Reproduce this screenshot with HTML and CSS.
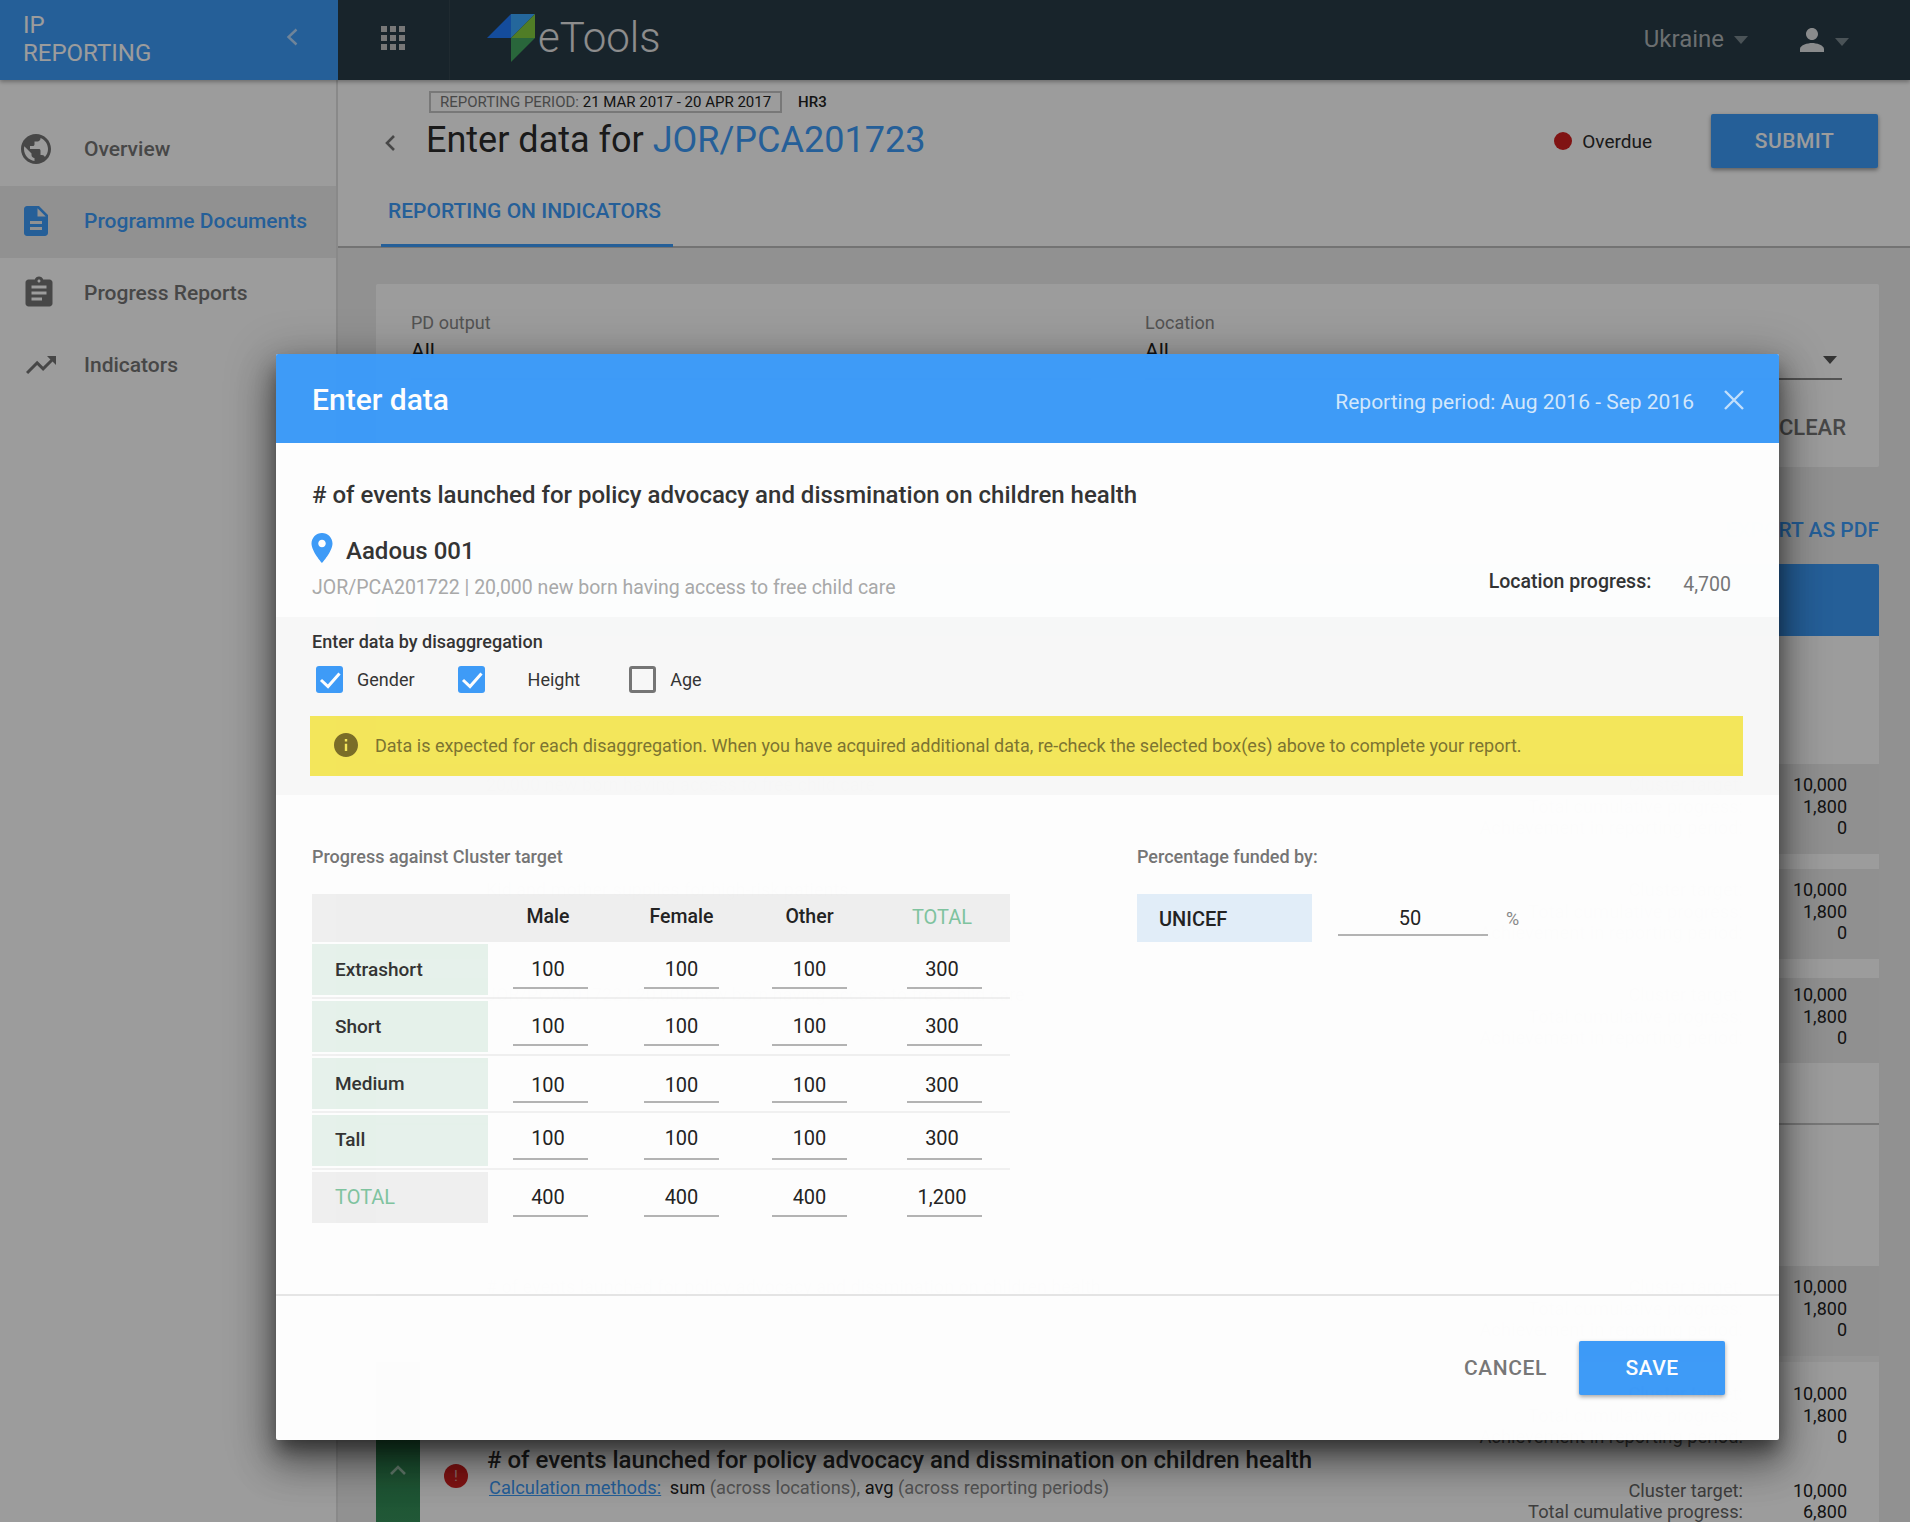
FILE: index.html
```html
<!DOCTYPE html>
<html>

<head>
    <meta charset="utf-8" />
    <title>IP Reporting - Enter data</title>
    <link rel="stylesheet" href="styles.css">
</head>

<body>
    <header class="topbar">
        <div class="brand">
            <div class="brand-name">IP<br>REPORTING</div>
            <svg class="brand-back" viewBox="0 0 12 18"><path d="M10.5 1.5 2.5 9l8 7.5" /></svg>
        </div>
        <div class="apps">
            <svg viewBox="0 0 24 24"><path d="M4 8h4V4H4v4zm6 12h4v-4h-4v4zm-6 0h4v-4H4v4zm0-6h4v-4H4v4zm6 0h4v-4h-4v4zm6-10v4h4V4h-4zm-6 4h4V4h-4v4zm6 6h4v-4h-4v4zm0 6h4v-4h-4v4z" /></svg>
        </div>
        <div class="logo">
            <svg viewBox="0 0 48 48">
                <path fill="#227cff" d="M0 24 24 0v24z" />
                <path fill="#3ba8ff" d="M24 0h24L24 24z" />
                <path fill="#84cc3f" d="M48 0v24H24z" />
                <path fill="#43a761" d="M24 24h24L24 48z" />
            </svg>
            <span>eTools</span>
        </div>
        <div class="country">Ukraine<i class="caret"></i></div>
        <div class="user">
            <svg viewBox="0 0 24 24"><path d="M12 12c2.21 0 4-1.79 4-4s-1.79-4-4-4-4 1.79-4 4 1.79 4 4 4zm0 2c-2.67 0-8 1.34-8 4v2h16v-2c0-2.66-5.33-4-8-4z" /></svg>
            <i class="caret"></i>
        </div>
    </header>

    <div class="layout">
        <nav class="sidebar">
            <a class="nav-item">
                <svg viewBox="0 0 24 24"><path d="M12 2C6.48 2 2 6.48 2 12s4.48 10 10 10 10-4.48 10-10S17.52 2 12 2zm-1 17.93c-3.95-.49-7-3.85-7-7.93 0-.62.08-1.21.21-1.79L9 15v1c0 1.1.9 2 2 2v1.93zm6.9-2.54c-.26-.81-1-1.39-1.9-1.39h-1v-3c0-.55-.45-1-1-1H8v-2h2c.55 0 1-.45 1-1V7h2c1.1 0 2-.9 2-2v-.41c2.93 1.19 5 4.06 5 7.41 0 2.08-.8 3.97-2.1 5.39z" /></svg>
                Overview
            </a>
            <a class="nav-item active">
                <svg viewBox="0 0 24 24"><path d="M14 2H6c-1.1 0-1.99.9-1.99 2L4 20c0 1.1.89 2 1.99 2H18c1.1 0 2-.9 2-2V8l-6-6zm2 16H8v-2h8v2zm0-4H8v-2h8v2zm-3-5V3.5L18.5 9H13z" /></svg>
                Programme Documents
            </a>
            <a class="nav-item nudge-3">
                <svg viewBox="0 0 24 24"><path d="M19 3h-4.18C14.4 1.84 13.3 1 12 1c-1.3 0-2.4.84-2.82 2H5c-1.1 0-2 .9-2 2v14c0 1.1.9 2 2 2h14c1.1 0 2-.9 2-2V5c0-1.1-.9-2-2-2zm-7 0c.55 0 1 .45 1 1s-.45 1-1 1-1-.45-1-1 .45-1 1-1zm2 14H7v-2h7v2zm3-4H7v-2h10v2zm0-4H7V7h10v2z" /></svg>
                Progress Reports
            </a>
            <a class="nav-item nudge-5">
                <svg viewBox="0 0 24 24"><path d="M16 6l2.29 2.29-4.88 4.88-4-4L2 16.59 3.41 18l6-6 4 4 6.3-6.29L22 12V6z" /></svg>
                Indicators
            </a>
        </nav>

        <main class="main">
            <div class="page-head">
                <div class="period-row">
                    <span class="period-tag">REPORTING PERIOD: <b>21 MAR 2017 - 20 APR 2017</b></span>
                    <span class="period-code">HR3</span>
                </div>
                <div class="title-row">
                    <svg class="page-back" viewBox="0 0 12 18"><path d="M10 2 3 9l7 7" /></svg>
                    <h1>Enter data for <a>JOR/PCA201723</a></h1>
                    <div class="status"><i></i>Overdue</div>
                    <div class="btn-submit">SUBMIT</div>
                </div>
                <div class="tab">REPORTING ON INDICATORS</div>
            </div>

            <div class="content">
                <div class="filter-card">
                    <div class="filter-col">
                        <label>PD output</label>
                        <div class="filter-value">All</div>
                    </div>
                    <div class="filter-col wide">
                        <label>Location</label>
                        <div class="filter-value">All</div>
                        <i class="caret"></i>
                    </div>
                    <div class="filter-clear">CLEAR</div>
                </div>

                <div class="export">EXPORT AS PDF</div>
                <div class="panel-head"></div>

                <div class="panel">
                    <div class="ind-head"></div>
                    <div class="ind-row">
                        <div class="ind-title">20,000 new born having access to free child care</div>
                        <div class="ind-labels"><div>Cluster target:</div><div>Total cumulative progress:</div><div>Achievement in reporting period:</div></div>
                        <div class="ind-values"><div>10,000</div><div>1,800</div><div>0</div></div>
                    </div>
                    <div class="ind-row gap-15">
                        <div class="ind-title">Kid and mother supplies for high-risk patients</div>
                        <div class="ind-labels"><div>Cluster target:</div><div>Total cumulative progress:</div><div>Achievement in reporting period:</div></div>
                        <div class="ind-values"><div>10,000</div><div>1,800</div><div>0</div></div>
                    </div>
                    <div class="ind-row gap-19 short">
                        <div class="ind-title">JOR/PCA201722 | 20,000 new born having access to free child care</div>
                        <div class="ind-labels"><div>Cluster target:</div><div>Total cumulative progress:</div><div>Achievement in reporting period:</div></div>
                        <div class="ind-values"><div>10,000</div><div>1,800</div><div>0</div></div>
                    </div>
                    <div class="ind-spacer first"></div>
                    <div class="ind-spacer second"></div>
                    <div class="ind-row">
                        <div class="ind-title"># of events launched for policy advocacy and dissmination on children health</div>
                        <div class="ind-labels"><div>Cluster target:</div><div>Total cumulative progress:</div><div>Achievement in reporting period:</div></div>
                        <div class="ind-values"><div>10,000</div><div>1,800</div><div>0</div></div>
                    </div>
                    <div class="ind-band"></div>

                    <div class="ind-last">
                        <div class="ind-bar">
                            <svg viewBox="0 0 20 12"><path d="M3 10l7-7 7 7" /></svg>
                        </div>
                        <div class="ind-alert">!</div>
                        <div class="ind-main">
                            <div class="ind-name"># of events launched for policy advocacy and dissmination on children health</div>
                            <div class="ind-calc">
                                <a>Calculation methods:</a> <b>sum</b> (across locations), <b>avg</b> (across reporting periods)
                            </div>
                        </div>
                        <div class="ind-figures">
                            <div class="ind-line"><div class="ind-labels"><div>Cluster target:</div><div>Total cumulative progress:</div><div>Achievement in reporting period:</div></div>
                                <div class="ind-values"><div>10,000</div><div>1,800</div><div>0</div></div></div>
                            <div class="ind-line next"><div class="ind-labels"><div>Cluster target:</div><div>Total cumulative progress:</div></div>
                                <div class="ind-values"><div>10,000</div><div>6,800</div></div></div>
                        </div>
                    </div>
                </div>
            </div>
        </main>
    </div>

    <div class="backdrop"></div>

    <section class="modal">
        <div class="modal-head">
            <h2>Enter data</h2>
            <span class="modal-period">Reporting period: Aug 2016 - Sep 2016</span>
            <svg class="modal-close" viewBox="0 0 20 20"><path d="M1 1l18 18M19 1 1 19" /></svg>
        </div>

        <div class="modal-intro">
            <h3># of events launched for policy advocacy and dissmination on children health</h3>
            <div class="location-row">
                <div>
                    <div class="location-name">
                        <svg viewBox="5 2 14 20"><path d="M12 2C8.13 2 5 5.13 5 9c0 5.25 7 13 7 13s7-7.75 7-13c0-3.87-3.13-7-7-7zm0 9.5c-1.38 0-2.5-1.12-2.5-2.5s1.12-2.5 2.5-2.5 2.5 1.12 2.5 2.5-1.12 2.5-2.5 2.5z" /></svg>
                        Aadous 001
                    </div>
                    <div class="location-sub">JOR/PCA201722 | 20,000 new born having access to free child care</div>
                </div>
                <div class="location-progress"><b>Location progress:</b><span>4,700</span></div>
            </div>
        </div>

        <div class="disagg">
            <div class="disagg-title">Enter data by disaggregation</div>
            <div class="checks">
                <div class="check on">
                    <svg viewBox="0 0 27 27"><path d="M5 14l7 6.5L23.5 7.5" /></svg>
                </div>
                <span class="check-label gender">Gender</span>
                <div class="check on">
                    <svg viewBox="0 0 27 27"><path d="M5 14l7 6.5L23.5 7.5" /></svg>
                </div>
                <span class="check-label height">Height</span>
                <div class="check"></div>
                <span class="check-label">Age</span>
            </div>
            <div class="notice">
                <svg viewBox="2 2 20 20"><path d="M12 2C6.48 2 2 6.48 2 12s4.48 10 10 10 10-4.48 10-10S17.52 2 12 2zm1 15h-2v-6h2v6zm0-8h-2V7h2v2z" /></svg>
                Data is expected for each disaggregation. When you have acquired additional data, re-check the selected box(es) above to complete your report.
            </div>
        </div>

        <div class="entry">
            <div class="entry-left">
                <div class="entry-title">Progress against Cluster target</div>
                <div class="grid-row grid-head">
                    <div></div>
                    <div class="num first">Male</div>
                    <div class="num">Female</div>
                    <div class="num">Other</div>
                    <div class="num last total-text">TOTAL</div>
                </div>
                <div class="grid-row">
                    <div class="row-label">Extrashort</div>
                    <div class="num first field">100</div>
                    <div class="num field">100</div>
                    <div class="num field">100</div>
                    <div class="num last field">300</div>
                </div>
                <div class="grid-row">
                    <div class="row-label">Short</div>
                    <div class="num first field">100</div>
                    <div class="num field">100</div>
                    <div class="num field">100</div>
                    <div class="num last field">300</div>
                </div>
                <div class="grid-row row-medium">
                    <div class="row-label">Medium</div>
                    <div class="num first field">100</div>
                    <div class="num field">100</div>
                    <div class="num field">100</div>
                    <div class="num last field">300</div>
                </div>
                <div class="grid-row row-tall">
                    <div class="row-label">Tall</div>
                    <div class="num first field">100</div>
                    <div class="num field">100</div>
                    <div class="num field">100</div>
                    <div class="num last field">300</div>
                </div>
                <div class="grid-row grid-total">
                    <div class="row-label total-text">TOTAL</div>
                    <div class="num first field">400</div>
                    <div class="num field">400</div>
                    <div class="num field">400</div>
                    <div class="num last field">1,200</div>
                </div>
            </div>
            <div class="entry-right">
                <div class="entry-title">Percentage funded by:</div>
                <div class="fund-row">
                    <div class="fund-name">UNICEF</div>
                    <div class="fund-input">50</div>
                    <span class="fund-unit">%</span>
                </div>
            </div>
        </div>

        <div class="modal-foot">
            <span class="btn-cancel">CANCEL</span>
            <span class="btn-save">SAVE</span>
        </div>
    </section>
</body>

</html>
```

FILE: styles.css
```css
* {
    box-sizing: border-box;
}

html,
body {
    font-family: Roboto, 'Liberation Sans', sans-serif;
    margin: 0;
    padding: 0;
    height: 1522px;
    overflow: hidden;
    color: #333;
    background: #eee;
}

h1,
h2,
h3 {
    margin: 0;
}

.caret {
    display: inline-block;
    width: 0;
    height: 0;
    border-left: 7px solid transparent;
    border-right: 7px solid transparent;
    border-top: 8px solid #7a888f;
}

/* top bar */
.topbar {
    display: flex;
    align-items: center;
    height: 80px;
    background: #283b47;
    position: relative;
    z-index: 2;
    box-shadow: 0 2px 4px rgba(0, 0, 0, .3);
}

.brand {
    display: flex;
    align-items: center;
    justify-content: space-between;
    width: 338px;
    height: 80px;
    padding: 0 40px 2px 23px;
    background: #3d9bf9;
}

.brand-name {
    font-size: 24px;
    line-height: 28px;
    color: #fff;
}

.brand-back {
    width: 12px;
    height: 18px;
    margin-top: -4px;
    fill: none;
    stroke: #b6d8fb;
    stroke-width: 2.4;
}

.apps {
    width: 112px;
    height: 80px;
    padding: 20px 0 0 37px;
    border-right: 1px solid #34464f;
}

.apps svg {
    display: block;
    width: 36px;
    height: 36px;
    fill: #c4c4c4;
}

.logo {
    display: flex;
    align-items: center;
    margin-left: 37px;
    flex: 1;
}

.logo svg {
    width: 48px;
    height: 48px;
    margin-top: -5px;
}

.logo span {
    font-size: 42px;
    font-weight: 300;
    color: #e6e6e6;
    margin: -5px 0 0 3px;
}

.country {
    display: flex;
    align-items: center;
    font-size: 24px;
    color: #afb5b8;
    margin-right: 46px;
    margin-top: -2px;
}

.country .caret {
    margin-left: 10px;
    margin-top: 2px;
}

.user {
    display: flex;
    align-items: center;
    margin-right: 61px;
}

.user svg {
    width: 36px;
    height: 36px;
    fill: #e0e3e5;
}

.user .caret {
    margin-left: 5px;
    margin-top: 3px;
}

/* page under the dialog */
.layout {
    display: flex;
    height: 1442px;
}

.sidebar {
    width: 338px;
    flex-shrink: 0;
    padding-top: 34px;
    background: #fff;
    border-right: 2px solid #e0e0e0;
}

.nav-item {
    display: flex;
    align-items: center;
    gap: 30px;
    height: 72px;
    padding: 0 0 2px 18px;
    font-size: 21px;
    font-weight: 500;
    color: #757575;
}

.nav-item svg {
    width: 36px;
    height: 36px;
    fill: #757575;
}

.nav-item.nudge-3 svg {
    margin: 0 -3px 0 3px;
}

.nav-item.nudge-5 svg {
    margin: 0 -5px 0 5px;
}

.nav-item.active {
    background: #eee;
    color: #3d9bf9;
}

.nav-item.active svg {
    fill: #3d9bf9;
}

.main {
    flex: 1;
    min-width: 0;
}

.page-head {
    height: 168px;
    background: #fff;
    border-bottom: 2px solid #bcbcbc;
}

.period-row {
    display: flex;
    align-items: center;
    gap: 16px;
    padding: 11px 0 0 91px;
}

.period-tag {
    height: 22px;
    padding: 0 9px;
    border: 2px solid #c4c4c4;
    font-size: 15px;
    line-height: 18px;
    color: #777;
    white-space: nowrap;
}

.period-tag b {
    font-weight: 400;
    color: #222;
}

.period-code {
    font-size: 15px;
    font-weight: 500;
    color: #222;
}

.title-row {
    display: flex;
    align-items: center;
    height: 54px;
    margin-top: 1px;
    padding: 0 32px 0 46px;
}

.page-back {
    width: 12px;
    height: 18px;
    margin-right: 30px;
    margin-top: 4px;
    fill: none;
    stroke: #757575;
    stroke-width: 2.6;
}

h1 {
    flex: 1;
    font-size: 36px;
    font-weight: 400;
    color: #2b2b2b;
    margin-top: -2px;
}

h1 a {
    color: #3d9bf9;
}

.status {
    display: flex;
    align-items: center;
    gap: 10px;
    font-size: 19px;
    color: #2b2b2b;
    margin-right: 59px;
}

.status i {
    width: 18px;
    height: 18px;
    border-radius: 50%;
    background: #d11f1f;
}

.btn-submit {
    width: 167px;
    height: 54px;
    line-height: 54px;
    text-align: center;
    background: #3d9bf9;
    color: #fff;
    font-size: 21px;
    font-weight: 500;
    letter-spacing: .5px;
    border-radius: 2px;
    box-shadow: 0 2px 4px rgba(0, 0, 0, .4);
}

.tab {
    display: flex;
    align-items: center;
    width: 292px;
    height: 79px;
    margin: 0 0 0 43px;
    padding: 10px 0 0 7px;
    font-size: 21px;
    font-weight: 500;
    color: #3d9bf9;
    border-bottom: 3px solid #3d9bf9;
    white-space: nowrap;
}

.content {
    padding: 36px 31px 0 38px;
}

.filter-card {
    position: relative;
    display: flex;
    gap: 54px;
    height: 183px;
    padding: 28px 33px 0 35px;
    background: #fff;
    border-radius: 2px;
}

.filter-col {
    position: relative;
    width: 680px;
    height: 68px;
    border-bottom: 2px solid #888;
}

.filter-col.wide {
    width: 697px;
}

.filter-col label {
    display: block;
    font-size: 18px;
    line-height: 22px;
    color: #888;
}

.filter-value {
    font-size: 21px;
    margin-top: 5px;
    color: #222;
}

.filter-col .caret {
    position: absolute;
    right: 5px;
    top: 44px;
    border-top-color: #555;
}

.filter-clear {
    position: absolute;
    right: 33px;
    top: 131px;
    font-size: 22px;
    font-weight: 500;
    color: #757575;
}

.export {
    margin: 51px 0 22px;
    height: 24px;
    line-height: 24px;
    text-align: right;
    font-size: 21px;
    font-weight: 500;
    color: #3d9bf9;
}

.panel-head {
    height: 72px;
    background: #3d9bf9;
    border-radius: 2px 2px 0 0;
}

.panel {
    background: #fff;
    font-size: 18px;
}

.ind-head {
    height: 128px;
}

.ind-row {
    display: flex;
    height: 90px;
    padding: 10px 32px 0 110px;
    background: #ebebeb;
    line-height: 21.5px;
}

.ind-row.gap-15 {
    margin-top: 15px;
}

.ind-row.gap-19 {
    margin-top: 19px;
}

.ind-row.short {
    height: 85px;
    padding-top: 6px;
}

.ind-title {
    flex: 1;
    color: #666;
}

.ind-labels {
    text-align: right;
    font-size: 18.3px;
    color: #666;
    white-space: nowrap;
}

.ind-values {
    width: 104px;
    text-align: right;
    color: #222;
}

.ind-spacer.first {
    height: 62px;
    border-bottom: 2px solid #c4c4c4;
}

.ind-spacer.second {
    height: 141px;
}

.ind-band {
    height: 6px;
    background: #f4f4f4;
}

.ind-last {
    display: flex;
    height: 160px;
}

.ind-bar {
    width: 44px;
    padding-top: 97px;
    background: linear-gradient(#237040, #36905a);
    text-align: center;
}

.ind-bar svg {
    width: 20px;
    height: 12px;
    fill: none;
    stroke: #a3c9b2;
    stroke-width: 2.6;
}

.ind-alert {
    width: 24px;
    height: 24px;
    margin: 102px 19px 0 24px;
    border-radius: 50%;
    background: #d11f1f;
    color: #e6b0b0;
    font-size: 15px;
    line-height: 24px;
    text-align: center;
    flex-shrink: 0;
}

.ind-main {
    flex: 1;
    padding-top: 84px;
    min-width: 0;
}

.ind-name {
    font-size: 24px;
    line-height: 28px;
    font-weight: 500;
    color: #2b2b2b;
    white-space: nowrap;
}

.ind-calc {
    font-size: 18.3px;
    line-height: 28px;
    margin-left: 2px;
    color: #888;
    white-space: nowrap;
}

.ind-calc a {
    color: #3d9bf9;
    text-decoration: underline;
    margin-right: 4px;
}

.ind-calc b {
    font-weight: 400;
    color: #222;
}

.ind-figures {
    padding: 21px 32px 0 0;
    line-height: 21.5px;
}

.ind-line {
    display: flex;
    justify-content: flex-end;
}

.ind-line.next {
    margin-top: 32px;
}

/* dialog */
.backdrop {
    position: absolute;
    inset: 0;
    z-index: 5;
    background: rgba(0, 0, 0, .39);
}

.modal {
    position: absolute;
    left: 276px;
    top: 354px;
    z-index: 6;
    width: 1503px;
    height: 1086px;
    background: #fff;
    opacity: .988;
    border-radius: 2px;
    box-shadow: 0 12px 20px rgba(0, 0, 0, .25), 0 24px 38px 3px rgba(0, 0, 0, .3), 0 9px 46px 8px rgba(0, 0, 0, .22), 0 11px 15px -7px rgba(0, 0, 0, .3);
}

.modal-head {
    display: flex;
    align-items: center;
    height: 89px;
    padding: 0 35px 0 36px;
    background: #3d9bf9;
    border-radius: 2px 2px 0 0;
    color: #fff;
}

.modal-head h2 {
    flex: 1;
    font-size: 30px;
    font-weight: 500;
    margin-top: 2px;
}

.modal-period {
    font-size: 21px;
    color: #d3e8fd;
    margin-top: 7px;
}

.modal-close {
    width: 20px;
    height: 20px;
    margin: 2px 0 0 30px;
    fill: none;
    stroke: #c3e0fd;
    stroke-width: 2.4;
}

.modal-intro {
    height: 174px;
    padding: 37px 48px 0 36px;
}

.modal-intro h3 {
    font-size: 24px;
    line-height: 30px;
    font-weight: 500;
    color: #333;
}

.location-row {
    display: flex;
    justify-content: space-between;
    margin-top: 23px;
}

.location-name {
    display: flex;
    align-items: center;
    gap: 13px;
    height: 36px;
    font-size: 24px;
    font-weight: 500;
    color: #333;
}

.location-name svg {
    width: 22px;
    height: 30px;
    margin: -6px 0 0 -1px;
    fill: #3d9bf9;
}

.location-sub {
    margin-top: 6px;
    font-size: 19.5px;
    line-height: 26px;
    color: #aaa;
}

.location-progress {
    display: flex;
    gap: 32px;
    align-self: flex-end;
    padding-bottom: 3px;
    font-size: 19.5px;
    line-height: 26px;
    color: #777;
}

.location-progress b {
    font-weight: 500;
    color: #333;
}

.location-progress span {
    padding-top: 3px;
}

.disagg {
    height: 178px;
    padding: 14px 36px 0 34px;
    background: #f9f9f9;
}

.disagg-title {
    font-size: 18px;
    line-height: 22px;
    font-weight: 500;
    color: #333;
    margin-left: 2px;
}

.checks {
    display: flex;
    align-items: center;
    height: 27px;
    margin: 13px 0 0 6px;
}

.check {
    width: 27px;
    height: 27px;
    border: 3px solid #757575;
    border-radius: 3px;
}

.check.on {
    background: #3d9bf9;
    border: 0;
}

.check svg {
    display: block;
    width: 27px;
    height: 27px;
    fill: none;
    stroke: #fff;
    stroke-width: 3;
}

.check-label {
    font-size: 18px;
    color: #333;
    margin-left: 14px;
}

.check-label.gender {
    margin-right: 43px;
}

.check-label.height {
    margin: 0 49px 0 43px;
}

.notice {
    display: flex;
    align-items: center;
    gap: 17px;
    height: 60px;
    margin: 23px 0 0;
    padding: 0 0 2px 24px;
    background: #f5e75b;
    font-size: 18px;
    color: #7c7430;
    white-space: nowrap;
}

.notice svg {
    width: 24px;
    height: 24px;
    flex-shrink: 0;
    fill: #7a6d27;
}

.entry {
    display: flex;
    height: 501px;
    padding: 50px 0 0 36px;
    border-bottom: 2px solid #e6e6e6;
}

.entry-left {
    width: 825px;
}

.entry-title {
    font-size: 18px;
    line-height: 24px;
    font-weight: 500;
    color: #757575;
    margin-bottom: 25px;
}

.grid-row {
    display: grid;
    grid-template-columns: 176px 100px 131px 128px 135px;
    width: 698px;
    height: 55px;
    padding-bottom: 2px;
    margin-bottom: 2px;
    border-bottom: 2px solid #f1f1f1;
    font-size: 20px;
    color: #222;
}

.grid-row.grid-head {
    height: 48px;
    padding: 0;
    background: #f0f0f0;
    border: 0;
    font-size: 19.5px;
    font-weight: 500;
}

.grid-row.grid-total {
    border: 0;
}

.row-label {
    display: flex;
    align-items: center;
    height: 51px;
    padding-left: 23px;
    background: #e7f3ec;
    font-size: 19px;
    font-weight: 500;
    color: #333;
}

.grid-total .row-label {
    height: 51px;
    padding-bottom: 2px;
    background: #f0f0f0;
    font-size: 20px;
    font-weight: 400;
    color: #7fc4a0;
}

.num {
    justify-self: end;
    width: 75px;
    line-height: 46px;
    text-align: center;
}

.num.first {
    padding-right: 5px;
}

.num.last {
    padding-right: 5px;
}

.field {
    height: 45px;
    line-height: 50px;
    border-bottom: 2px solid #b4b4b4;
}

.row-medium .field {
    line-height: 55px;
}

.row-tall .field {
    line-height: 47px;
}

.row-tall .row-label {
    padding-bottom: 3px;
}

.total-text {
    color: #7fc4a0;
    font-size: 20px;
    font-weight: 400;
}

.entry-right {
    flex: 1;
}

.fund-row {
    display: flex;
    align-items: flex-start;
}

.fund-name {
    width: 175px;
    height: 48px;
    line-height: 50px;
    padding-left: 22px;
    background: #e2effa;
    font-size: 20px;
    font-weight: 500;
    color: #222;
}

.fund-input {
    width: 150px;
    height: 42px;
    margin-left: 26px;
    line-height: 49px;
    padding-right: 6px;
    text-align: center;
    font-size: 20px;
    color: #222;
    border-bottom: 2px solid #b4b4b4;
}

.fund-unit {
    margin-left: 18px;
    line-height: 50px;
    font-size: 18px;
    color: #888;
}

.modal-foot {
    display: flex;
    align-items: center;
    justify-content: flex-end;
    gap: 32px;
    height: 142px;
    padding: 2px 54px 0 0;
}

.btn-cancel {
    font-size: 21px;
    font-weight: 500;
    letter-spacing: .6px;
    color: #777;
}

.btn-save {
    width: 146px;
    height: 54px;
    line-height: 54px;
    text-align: center;
    font-size: 21px;
    font-weight: 500;
    letter-spacing: .5px;
    color: #fff;
    background: #3d9bf9;
    border-radius: 2px;
    box-shadow: 0 2px 4px rgba(0, 0, 0, .35);
}
```
